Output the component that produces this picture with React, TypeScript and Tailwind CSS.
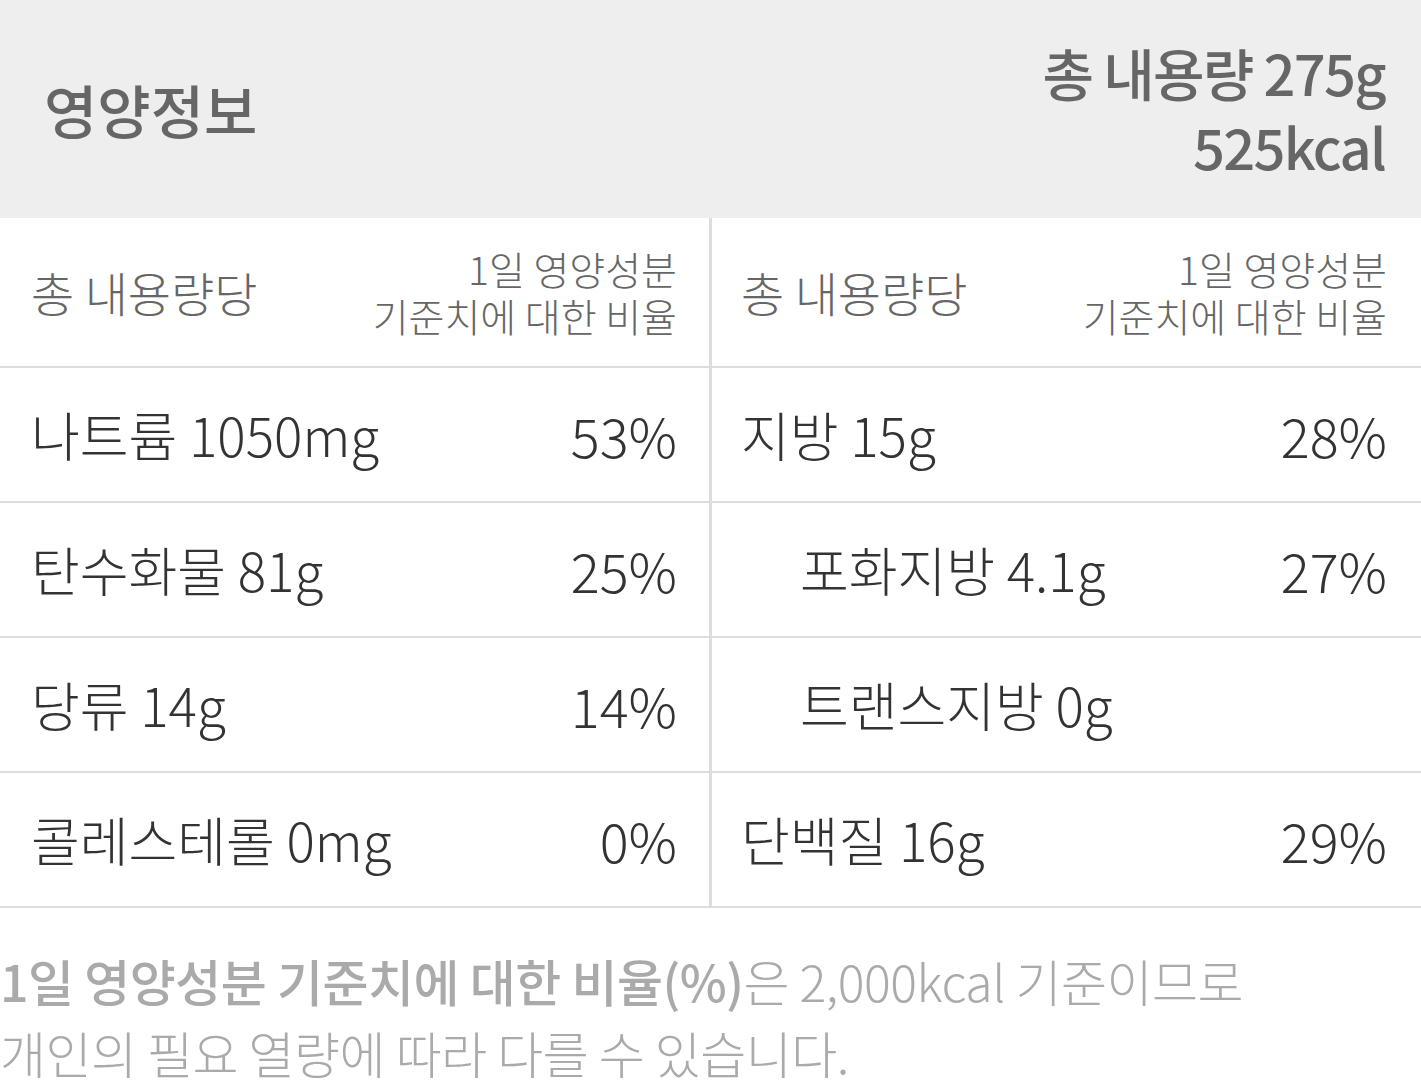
import React from 'react'

type Row = {
  name: string
  value?: string
  indent?: boolean
}

const leftRows: Row[] = [
  { name: '나트륨 1050mg', value: '53%' },
  { name: '탄수화물 81g', value: '25%' },
  { name: '당류 14g', value: '14%' },
  { name: '콜레스테롤 0mg', value: '0%' },
]

const rightRows: Row[] = [
  { name: '지방 15g', value: '28%' },
  { name: '포화지방 4.1g', value: '27%', indent: true },
  { name: '트랜스지방 0g', indent: true },
  { name: '단백질 16g', value: '29%' },
]

function HeadCell({ right }: { right?: boolean }) {
  return (
    <div
      className={`flex items-center justify-between h-[150px] border-b-2 border-[#dddddd] ${
        right ? 'border-l-[3px] pl-[29px] pr-[34px]' : 'pl-[31px] pr-[32px]'
      }`}
    >
      <span className="text-[47px] font-light text-[#666666]">총 내용량당</span>
      <span className="text-right text-[39px] leading-[47px] font-light text-[#666666]">
        1일 영양성분
        <br />
        기준치에 대한 비율
      </span>
    </div>
  )
}

function NutrientCell({ row, right }: { row: Row; right?: boolean }) {
  return (
    <div
      className={`flex items-center justify-between h-[135px] border-b-2 border-[#dddddd] ${
        right ? 'border-l-[3px] pl-[29px] pr-[34px]' : 'pl-[31px] pr-[32px]'
      }`}
    >
      <span
        className={`text-[53px] font-light text-[#333333] ${
          row.indent ? 'pl-[59px]' : ''
        }`}
      >
        {row.name}
      </span>
      {row.value && (
        <span className="text-[54px] font-light text-[#333333]">
          {row.value}
        </span>
      )}
    </div>
  )
}

export default function App() {
  return (
    <div
      className="w-[1421px] bg-white"
      style={{ fontFamily: '"Noto Sans CJK KR", "Noto Sans", sans-serif' }}
    >
      <div className="flex items-center justify-between h-[218px] bg-[#eeeeee] pl-[44px] pr-[36px]">
        <span className="text-[58px] font-medium text-[#666666]">영양정보</span>
        <span className="text-right text-[56px] leading-[74px] font-medium text-[#666666] tracking-[-0.03em]">
          총 내용량 275g
          <br />
          525kcal
        </span>
      </div>

      <div className="grid grid-cols-[709px_1fr]">
        <div className="flex flex-col">
          <HeadCell />
          {leftRows.map((row) => (
            <NutrientCell key={row.name} row={row} />
          ))}
        </div>
        <div className="flex flex-col">
          <HeadCell right />
          {rightRows.map((row) => (
            <NutrientCell key={row.name} row={row} right />
          ))}
        </div>
      </div>

      <p className="pt-[36px] text-[50px] leading-[72px] font-light text-[#aaaaaa] tracking-[-0.01em]">
        <span className="font-medium">1일 영양성분 기준치에 대한 비율(%)</span>은
        2,000kcal 기준이므로
        <br />
        개인의 필요 열량에 따라 다를 수 있습니다.
      </p>
    </div>
  )
}
